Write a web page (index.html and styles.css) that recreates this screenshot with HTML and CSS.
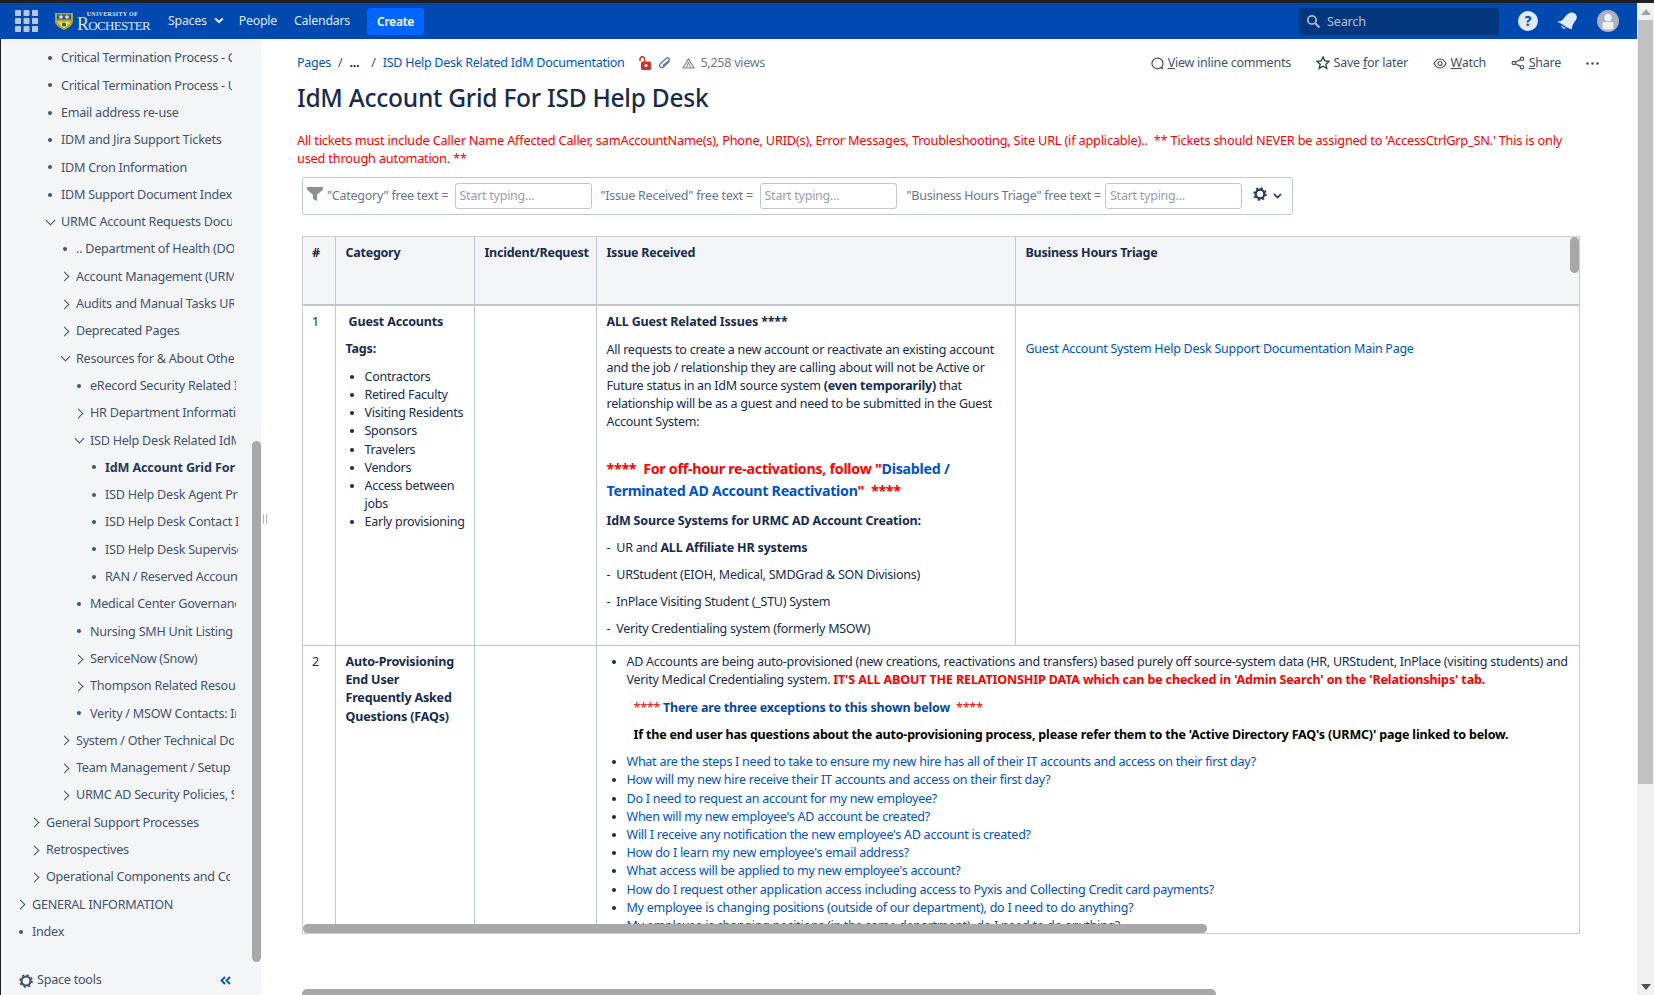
FILE: index.html
```html
<!DOCTYPE html>
<html lang="en">
<head>
<meta charset="utf-8">
<title>IdM Account Grid For ISD Help Desk</title>
<link rel="stylesheet" href="styles.css">
</head>
<body>
<div class="window">
  <div class="page">
    <header class="topbar">
      <svg class="waffle" width="23" height="22" viewBox="0 0 23 22"><g fill="#b3c8ea"><rect width="6" height="6" rx="1"/><rect x="8.500" width="6" height="6" rx="1"/><rect x="17" width="6" height="6" rx="1"/><rect y="8" width="6" height="6" rx="1"/><rect x="8.500" y="8" width="6" height="6" rx="1"/><rect x="17" y="8" width="6" height="6" rx="1"/><rect y="16" width="6" height="6" rx="1"/><rect x="8.500" y="16" width="6" height="6" rx="1"/><rect x="17" y="16" width="6" height="6" rx="1"/></g></svg>
      <div class="logo">
        <svg width="20" height="18" viewBox="0 0 20 18"><path d="M1 1h18v8c0 4-4 7-9 9-5-2-9-5-9-9z" fill="#a9a63c"/><path d="M3 2.500h14v5H3z" fill="#3c5a6e"/><path d="M3.500 9.500h13c-1 3-3.500 5-6.500 6.500-3-1.500-5.500-3.500-6.500-6.500z" fill="#e2d95e"/><circle cx="7" cy="5" r="1.800" fill="#dfe6f2"/><circle cx="13" cy="5" r="1.800" fill="#dfe6f2"/><circle cx="10" cy="12.500" r="2" fill="#3c5a6e"/></svg>
        <div class="logo-text"><span class="logo-small">UNIVERSITY of</span><span class="logo-big">Rochester</span></div>
      </div>
      <nav class="nav">
        <span class="nav-item nav-spaces">Spaces <svg class="nav-chev" width="10" height="7" viewBox="0 0 10 7"><path d="M1.200 1.500 5 5l3.800-3.500" fill="none" stroke="#deebff" stroke-width="2.200"/></svg></span>
        <span class="nav-item">People</span>
        <span class="nav-item">Calendars</span>
        <span class="create">Create</span>
      </nav>
      <div class="search">
        <svg width="15" height="15" viewBox="0 0 15 15"><circle cx="6" cy="6" r="4.200" fill="none" stroke="#a9b8d0" stroke-width="1.800"/><path d="m9.200 9.200 4.300 4.300" stroke="#a9b8d0" stroke-width="2"/></svg>
        <span>Search</span>
      </div>
      <div class="top-icons">
        <span class="help">?</span>
        <svg width="21" height="19" viewBox="0 0 21 19"><path d="M0.500 9.500C3 9.500 5.500 8.500 7.500 5.500 9.500 2.500 12 0.500 15 0.500c1 0 2 .3 2.800 1 .9.800 1.700 1.700 2 2.800.3 2-.8 4-2.500 6-1.500 2-2 4.500-2.800 7.200-3-1-6-3-9-5C3.800 11.500 2 10.800 0.500 9.500z" fill="#deebff"/><path d="M4 13.500c.5 2 2.200 3.500 4 3.300l.5-.8z" fill="#deebff"/></svg>
        <svg width="22" height="22" viewBox="0 0 22 22"><circle cx="11" cy="11" r="11" fill="#aab2c0"/><circle cx="11" cy="7.500" r="3.700" fill="#eef1f5"/><rect x="5.500" y="12" width="11" height="7.500" rx="2" fill="#eef1f5"/></svg>
      </div>
    </header>
    <div class="main">
      <aside class="sidebar">
        <ul class="tree">
          <li class="row l2 dot"><span class="row-text">Critical Termination Process - Contractors</span></li>
          <li class="row l2 dot"><span class="row-text">Critical Termination Process - URMC Employees</span></li>
          <li class="row l2 dot"><span class="row-text">Email address re-use</span></li>
          <li class="row l2 dot"><span class="row-text">IDM and Jira Support Tickets</span></li>
          <li class="row l2 dot"><span class="row-text">IDM Cron Information</span></li>
          <li class="row l2 dot"><span class="row-text">IDM Support Document Index</span></li>
          <li class="row l2 down"><span class="row-text">URMC Account Requests Documentation</span></li>
          <li class="row l3 dot"><span class="row-text">.. Department of Health (DOH) Accounts</span></li>
          <li class="row l3 right"><span class="row-text">Account Management (URMC)</span></li>
          <li class="row l3 right"><span class="row-text">Audits and Manual Tasks URMC</span></li>
          <li class="row l3 right"><span class="row-text">Deprecated Pages</span></li>
          <li class="row l3 down"><span class="row-text">Resources for &amp; About Other Teams</span></li>
          <li class="row l4 dot"><span class="row-text">eRecord Security Related Items</span></li>
          <li class="row l4 right"><span class="row-text">HR Department Information</span></li>
          <li class="row l4 down"><span class="row-text">ISD Help Desk Related IdM Documentation</span></li>
          <li class="row l5 dot current"><span class="row-text">IdM Account Grid For ISD Help Desk</span></li>
          <li class="row l5 dot"><span class="row-text">ISD Help Desk Agent Process</span></li>
          <li class="row l5 dot"><span class="row-text">ISD Help Desk Contact Information</span></li>
          <li class="row l5 dot"><span class="row-text">ISD Help Desk Supervisors</span></li>
          <li class="row l5 dot"><span class="row-text">RAN / Reserved Account Names</span></li>
          <li class="row l4 dot"><span class="row-text">Medical Center Governance</span></li>
          <li class="row l4 dot"><span class="row-text">Nursing SMH Unit Listing</span></li>
          <li class="row l4 right"><span class="row-text">ServiceNow (Snow)</span></li>
          <li class="row l4 right"><span class="row-text">Thompson Related Resources</span></li>
          <li class="row l4 dot"><span class="row-text">Verity / MSOW Contacts: Info</span></li>
          <li class="row l3 right"><span class="row-text">System / Other Technical Docs</span></li>
          <li class="row l3 right"><span class="row-text">Team Management / Setup</span></li>
          <li class="row l3 right"><span class="row-text">URMC AD Security Policies, Standards</span></li>
          <li class="row l1 right"><span class="row-text">General Support Processes</span></li>
          <li class="row l1 right"><span class="row-text">Retrospectives</span></li>
          <li class="row l1 right"><span class="row-text">Operational Components and Configuration</span></li>
          <li class="row l0 right"><span class="row-text">GENERAL INFORMATION</span></li>
          <li class="row l0 dot"><span class="row-text">Index</span></li>
        </ul>
        <div class="space-tools">
          <svg width="14" height="14" viewBox="0 0 14 14"><circle cx="7" cy="7" r="4.500" fill="none" stroke="#42526e" stroke-width="2.200"/><circle cx="7" cy="7" r="6" fill="none" stroke="#42526e" stroke-width="1.600" stroke-dasharray="2.200 2.500"/></svg>
          <span>Space tools</span>
          <svg class="collapse" width="11" height="9" viewBox="0 0 11 9"><path d="M5 1 1.500 4.500 5 8M10 1 6.500 4.500 10 8" fill="none" stroke="#0052cc" stroke-width="1.800"/></svg>
        </div>
        <div class="side-thumb"></div>
      </aside>
      <div class="handle"></div>
      <main class="content">
        <div class="meta">
          <div class="crumbs">
            <a>Pages</a><span class="sep">/</span><b class="more">...</b><span class="sep sep2">/</span><a>ISD Help Desk Related IdM Documentation</a>
            <svg class="lock" width="13" height="14" viewBox="0 0 13 14"><rect x="2" y="5.500" width="10" height="8.500" rx="1.500" fill="#c9372c"/><path d="M1 5V3a2.300 2.300 0 0 1 4.600 0v3" fill="none" stroke="#c9372c" stroke-width="1.500"/><circle cx="7" cy="9.500" r="1.500" fill="#fff"/></svg>
            <svg class="clip" width="13" height="12" viewBox="0 0 13 12"><path d="M11.500 4 5.500 10a2.300 2.300 0 0 1-3.300-3.300L8.500 1.300A1.500 1.500 0 0 1 10.800 3.500L4.800 8.800" fill="none" stroke="#5a7ba8" stroke-width="1.300"/></svg>
            <svg class="views-icon" width="13" height="11" viewBox="0 0 13 11"><path d="M6.500 1 12 10H1z" fill="none" stroke="#7a869a" stroke-width="1.200"/><path d="M6.500 4 4.500 10M6.500 4l2 6" stroke="#7a869a"/></svg>
            <span class="views">5,258 views</span>
          </div>
          <div class="actions">
            <span class="action"><svg width="13" height="13" viewBox="0 0 13 13"><path d="M10 10.500A5.500 5.300 0 1 1 12 6.500c0 1.500-.5 2.700-1.400 3.600l1.400 2z" fill="none" stroke="#42526e" stroke-width="1.200"/></svg><span><u>V</u>iew inline comments</span></span>
            <span class="action"><svg width="14" height="14" viewBox="0 0 14 14"><path d="m7 1 1.800 4 4.200.4-3.200 2.800 1 4.300L7 10.200 3.200 12.500l1-4.300L1 5.400 5.200 5z" fill="none" stroke="#253858" stroke-width="1.300"/></svg><span>Save <u>f</u>or later</span></span>
            <span class="action"><svg width="14" height="13" viewBox="0 0 14 13"><path d="M1 6.500C2.500 3.500 4.500 2 7 2s4.500 1.500 6 4.500C11.500 9.500 9.500 11 7 11S2.500 9.500 1 6.500z" fill="none" stroke="#42526e" stroke-width="1.200"/><circle cx="7" cy="6.500" r="2" fill="none" stroke="#42526e" stroke-width="1.200"/></svg><span><u>W</u>atch</span></span>
            <span class="action"><svg width="14" height="14" viewBox="0 0 14 14"><g fill="none" stroke="#42526e" stroke-width="1.200"><circle cx="11" cy="2.800" r="1.700"/><circle cx="11" cy="11.200" r="1.700"/><circle cx="2.800" cy="7" r="1.700"/><path d="M4.300 6.200 9.500 3.600M4.300 7.800l5.200 2.600"/></g></svg><span><u>S</u>hare</span></span>
            <svg class="dots" width="13" height="3" viewBox="0 0 13 3"><circle cx="1.500" cy="1.500" r="1.300" fill="#42526e"/><circle cx="6.500" cy="1.500" r="1.300" fill="#42526e"/><circle cx="11.500" cy="1.500" r="1.300" fill="#42526e"/></svg>
          </div>
        </div>
        <h1 class="title">IdM Account Grid For ISD Help Desk</h1>
        <p class="notice">All tickets must include Caller Name Affected Caller, samAccountName(s), Phone, URID(s), Error Messages, Troubleshooting, Site URL (if applicable)..&nbsp; ** Tickets should NEVER be assigned to 'AccessCtrlGrp_SN.' This is only used through automation. **</p>
        <div class="filter">
          <svg class="funnel" width="16" height="14" viewBox="0 0 16 14"><path d="M0 0h16v2.500L10 8v6L6 12V8L0 2.500z" fill="#8b8f94"/></svg>
          <label class="f-label">"Category" free text =</label><span class="f-input">Start typing...</span>
          <label class="f-label f2">"Issue Received" free text =</label><span class="f-input">Start typing...</span>
          <label class="f-label f3">"Business Hours Triage" free text =</label><span class="f-input">Start typing...</span>
          <svg class="gear" width="14" height="14" viewBox="0 0 14 14"><circle cx="7" cy="7" r="4.300" fill="none" stroke="#253858" stroke-width="2.200"/><circle cx="7" cy="7" r="6" fill="none" stroke="#253858" stroke-width="1.600" stroke-dasharray="2.200 2.500"/></svg>
          <svg class="gear-chev" width="9" height="6" viewBox="0 0 9 6"><path d="M1 1l3.500 3.500L8 1" fill="none" stroke="#253858" stroke-width="1.700"/></svg>
        </div>
        <div class="grid-wrap">
          <table class="grid">
            <colgroup><col class="c1"><col class="c2"><col class="c3"><col class="c4"><col class="c5"></colgroup>
            <thead>
              <tr><th>#</th><th>Category</th><th>Incident/Request</th><th>Issue Received</th><th>Business Hours Triage</th></tr>
            </thead>
            <tbody>
              <tr class="r1">
                <td>1</td>
                <td class="tag-cell">
                  <p class="cat-title"><b>&nbsp;Guest Accounts</b></p>
                  <p class="tags"><b>Tags:</b></p>
                  <ul class="tag-list">
                    <li>Contractors</li><li>Retired Faculty</li><li>Visiting Residents</li><li>Sponsors</li><li>Travelers</li><li>Vendors</li><li class="wrap-li">Access between jobs</li><li>Early provisioning</li>
                  </ul>
                </td>
                <td></td>
                <td>
                  <p><b>ALL Guest Related Issues ****</b></p>
                  <p class="gap-para">All requests to create a new account or reactivate an existing account and the job / relationship they are calling about will not be Active or Future status in an IdM source system <b>(even temporarily)</b> that relationship will be as a guest and need to be submitted in the Guest Account System:</p>
                  <p class="big"><span class="red">****&nbsp; For off-hour re-activations, follow "</span><a>Disabled / Terminated AD Account Reactivation</a><span class="red">"&nbsp; ****</span></p>
                  <p class="gap9"><b>IdM Source Systems for URMC AD Account Creation:</b></p>
                  <p class="gap9">-&nbsp; UR and <b>ALL Affiliate HR systems</b></p>
                  <p class="gap9">-&nbsp; URStudent (EIOH, Medical, SMDGrad &amp; SON Divisions)</p>
                  <p class="gap9">-&nbsp; InPlace Visiting Student (_STU) System</p>
                  <p class="gap9">-&nbsp; Verity Credentialing system (formerly MSOW)</p>
                </td>
                <td><p class="triage"><a>Guest Account System Help Desk Support Documentation Main Page</a></p></td>
              </tr>
              <tr>
                <td>2</td>
                <td><b>Auto-Provisioning End User Frequently Asked Questions (FAQs)</b></td>
                <td></td>
                <td colspan="2">
                  <ul class="faq-top">
                    <li>AD Accounts are being auto-provisioned (new creations, reactivations and transfers) based purely off source-system data (HR, URStudent, InPlace (visiting students) and<br>Verity Medical Credentialing system. <b class="red shout">IT'S ALL ABOUT THE RELATIONSHIP DATA which can be checked in 'Admin Search' on the 'Relationships' tab.</b></li>
                  </ul>
                  <p class="exc"><span class="red">****</span> <b class="blue">There are three exceptions to this shown below</b>&nbsp; <span class="red">****</span></p>
                  <p class="exc black"><b>If the end user has questions about the auto-provisioning process, please refer them to the 'Active Directory FAQ's (URMC)' page linked to below.</b></p>
                  <ul class="faq">
                    <li><a>What are the steps I need to take to ensure my new hire has all of their IT accounts and access on their first day?</a></li>
                    <li><a>How will my new hire receive their IT accounts and access on their first day?</a></li>
                    <li><a>Do I need to request an account for my new employee?</a></li>
                    <li><a>When will my new employee's AD account be created?</a></li>
                    <li><a>Will I receive any notification the new employee's AD account is created?</a></li>
                    <li><a>How do I learn my new employee's email address?</a></li>
                    <li><a>What access will be applied to my new employee's account?</a></li>
                    <li><a>How do I request other application access including access to Pyxis and Collecting Credit card payments?</a></li>
                    <li><a>My employee is changing positions (outside of our department), do I need to do anything?</a></li>
                    <li><a>My employee is changing positions (in the same department), do I need to do anything?</a></li>
                  </ul>
                </td>
              </tr>
            </tbody>
          </table>
          <div class="grid-v"></div>
          <div class="grid-h"></div>
        </div>
        <div class="page-h"></div>
      </main>
    </div>
  </div>
  <div class="win-scroll">
    <svg class="arrow" width="10" height="6" viewBox="0 0 10 6"><path d="M5 0l5 6H0z" fill="#a3a3a3"/></svg>
    <div class="win-thumb"></div>
    <svg class="arrow arrow-down" width="10" height="6" viewBox="0 0 10 6"><path d="M0 0h10L5 6z" fill="#505050"/></svg>
  </div>
</div>
</body>
</html>
```
FILE: styles.css
```css
* { box-sizing: border-box; }
html, body { margin: 0; height: 100%; overflow: hidden; }
body {
  font-family: "Noto Sans", "Liberation Sans", sans-serif;
  font-size: 12.75px;
  line-height: 18.2px;
  color: #172b4d;
  background: #fff;
  letter-spacing: -0.25px;
}
p { margin: 0; }
ul { margin: 0; padding: 0; }
a { color: #0052cc; }

.window { display: flex; height: 995px; border-top: 3px solid #1f2024; }
.page { flex: 1; min-width: 0; display: flex; flex-direction: column; }

/* top bar */
.topbar { height: 36px; background: #0049b0; display: flex; align-items: center; padding-left: 15px; color: #deebff; flex: none; }
.waffle { flex: none; }
.logo { display: flex; align-items: center; gap: 3px; margin-left: 16px; width: 97px; flex: none; }
.logo-text { display: flex; flex-direction: column; align-items: flex-end; font-family: "Liberation Serif", serif; color: #dbe6f7; letter-spacing: 0; }
.logo-small { font-size: 6px; line-height: 6px; font-weight: 700; margin-right: 12px; text-transform: uppercase; letter-spacing: 0.3px; }
.logo-big { font-size: 18px; line-height: 15px; font-variant: small-caps; letter-spacing: -0.7px; white-space: nowrap; }
.nav { display: flex; align-items: center; margin-left: 17px; }
.nav-item { margin-right: 17px; white-space: nowrap; font-size: 12.4px; }
.nav-spaces { margin-right: 15px; }
.nav-chev { margin-left: 4px; vertical-align: 1px; }
.create { background: #0065ff; color: #fff; font-weight: 600; width: 57px; height: 27px; line-height: 27px; text-align: center; border-radius: 3px; font-size: 12px; }
.search { margin-left: auto; width: 200px; height: 27px; background: #05377e; border-radius: 3px; display: flex; align-items: center; gap: 6px; padding-left: 7px; color: #b3c1d6; }
.top-icons { display: flex; align-items: center; gap: 19px; margin-left: 19px; margin-right: 18px; }
.help { width: 20px; height: 20px; border-radius: 50%; background: #deebff; color: #0049b0; font-weight: 700; font-size: 14px; line-height: 20px; text-align: center; letter-spacing: 0; }

.main { flex: 1; display: flex; min-height: 0; }

/* sidebar */
.sidebar { width: 261px; flex: none; background: #f4f5f7; border-left: 1px solid #1f2024; display: flex; flex-direction: column; position: relative; color: #42526e; font-size: 12.6px; }
.tree { list-style: none; overflow: hidden; padding-top: 5.4px; flex: 1; }
.row { height: 27.31px; line-height: 27.31px; white-space: nowrap; position: relative; }
.row-text { display: block; overflow: hidden; }
.l0 { padding-left: 31px; }
.l1 { padding-left: 45px; width: 229px; }
.l2 { padding-left: 60px; width: 231px; }
.l3 { padding-left: 75px; width: 233px; }
.l4 { padding-left: 89px; width: 235px; }
.l5 { padding-left: 104px; width: 237px; }
.row::before { content: ""; position: absolute; top: 50%; }
.dot::before { width: 4px; height: 4px; border-radius: 50%; background: #42526e; margin: -2px 0 0 -13px; }
.right::before { width: 6px; height: 6px; border-top: 1.700px solid #42526e; border-right: 1.700px solid #42526e; transform: rotate(45deg); margin: -3px 0 0 -15px; }
.down::before { width: 6px; height: 6px; border-bottom: 1.700px solid #42526e; border-right: 1.700px solid #42526e; transform: rotate(45deg); margin: -5px 0 0 -14px; }
.l0::before { left: 31px; }
.l1::before { left: 45px; }
.l2::before { left: 60px; }
.l3::before { left: 75px; }
.l4::before { left: 89px; }
.l5::before { left: 104px; }
.current { font-weight: 700; color: #253858; letter-spacing: -0.15px; width: 235px; }
.space-tools { height: 27px; display: flex; align-items: center; gap: 4px; padding: 0 30px 0 18px; flex: none; margin-bottom: 1px; }
.collapse { margin-left: auto; }
.side-thumb { position: absolute; right: 0; top: 402px; width: 9px; height: 521px; background: #a8a8a8; border-radius: 4.500px; }
.handle { width: 4px; flex: none; margin: 475px 0 0 2px; height: 10px; border-left: 1px solid #b3bac5; border-right: 1px solid #b3bac5; }

/* content */
.content { flex: 1; min-width: 0; overflow: hidden; padding: 15px 0 0 30px; }
.meta { display: flex; justify-content: space-between; align-items: center; height: 18px; font-size: 12.5px; }
.crumbs { display: flex; align-items: center; white-space: nowrap; }
.sep { margin: 0 7px; color: #42526e; }
.sep2 { margin: 0 7px 0 12px; }
.more { color: #172b4d; }
.lock { margin-left: 15px; }
.clip { margin-left: 6px; }
.views-icon { margin-left: 11px; }
.views { margin-left: 5px; color: #6b778c; }
.actions { display: flex; align-items: center; color: #42526e; margin-right: 38px; }
.action { display: flex; align-items: center; gap: 4px; margin-left: 24.700px; white-space: nowrap; }
.dots { margin-left: 25px; }
.title { margin: 11px 0 0; font-size: 24.5px; line-height: 30px; font-weight: 500; color: #172b4d; letter-spacing: -0.25px; }
.notice { margin-top: 18px; color: #ff0000; width: 1280px; letter-spacing: -0.2px; }
.filter { margin: 10px 0 0 5px; width: 991px; height: 38px; border: 1px solid #c1c7d0; border-radius: 3px; display: flex; align-items: center; color: #6b778c; white-space: nowrap; padding-left: 4px; font-size: 12.5px; }
.funnel { flex: none; margin-right: 4px; margin-bottom: 4px; }
.f-label { width: 127.500px; flex: none; }
.f2 { margin-left: 9px; width: 159px; }
.f3 { margin-left: 10px; width: 198.500px; }
.f-input { width: 137px; height: 26px; line-height: 24px; border: 1px solid #c1c7d0; border-radius: 3px; padding-left: 4px; color: #97a0af; flex: none; }
.gear { margin-left: 10.500px; margin-bottom: 4px; flex: none; }
.gear-chev { margin-left: 6px; flex: none; }

.grid-wrap { margin: 21px 0 0 5px; width: 1278px; height: 698px; border: 1px solid #ccc; position: relative; overflow: hidden; font-size: 12.5px; }
.grid { table-layout: fixed; width: 1780px; border-collapse: collapse; }
.c1 { width: 32px; } .c2 { width: 139px; } .c3 { width: 122px; } .c4 { width: 419px; }
.grid th, .grid td { text-align: left; vertical-align: top; padding: 7px 9px 7px 10px; border: 1px solid #c1c7d0; }
.grid th:first-child, .grid td:first-child { border-left: 0; padding-left: 9px; }
.grid tr:first-child th { border-top: 0; }
.grid thead tr { height: 68px; background: #f4f5f7; border-bottom: 2px solid #c1c7d0; }
.grid th { font-weight: 700; color: #172b4d; }
.grid b { letter-spacing: -0.17px; }
.r1 { height: 340px; }
.grid .r1 td { padding-bottom: 5px; }
.grid .tag-cell { padding-right: 2px; }
.cat-title { margin-top: 0; }
.tags { margin-top: 8px; }
.tag-list { margin: 10px 0 0 19px; }
.wrap-li { width: 90px; }
.gap-para { margin-top: 9px; }
.gap9 { margin-top: 9px; }
.big { font-size: 14.2px; line-height: 22px; font-weight: 700; margin: 26px 0 10px; }
.big a { color: #0052cc; }
.red { color: #ff0000; }
.grid b.shout { letter-spacing: -0.13px; }
.blue { color: #0747a6; }
.triage { margin-top: 27px; }
.faq-top { margin: 0 0 0 20px; white-space: nowrap; }
.exc { margin: 10px 0 0 27px; white-space: nowrap; }
.exc.black { margin-top: 8.500px; }
.black { color: #000; }
.faq { margin: 9px 0 0 20px; }
.grid-v { position: absolute; top: 0; right: 0; width: 9px; height: 36px; background: #a8a8a8; border-radius: 4.500px; }
.grid-h { position: absolute; left: 0; bottom: 0; height: 9px; width: 904px; background: #a8a8a8; border-radius: 4.500px; }
.page-h { margin: 55px 0 0 5px; width: 914px; height: 10px; background: #a8a8a8; border-radius: 5px; }

/* window scrollbar */
.win-scroll { width: 17px; flex: none; background: #f1f1f1; display: flex; flex-direction: column; align-items: center; position: relative; }
.arrow { flex: none; margin: 6px 0 5px; }
.win-thumb { width: 15px; height: 764px; background: #c1c1c1; }
.arrow-down { margin: auto 0 5px; }
```
